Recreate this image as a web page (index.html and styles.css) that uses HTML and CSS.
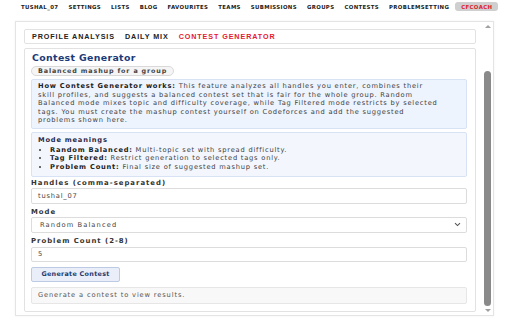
FILE: index.html
```html
<!DOCTYPE html>
<html>
<head>
<meta charset="utf-8">
<link rel="stylesheet" href="styles.css">
</head>
<body>
<nav class="topnav">
  <a class="nav-item">TUSHAL_07</a>
  <a class="nav-item">SETTINGS</a>
  <a class="nav-item">LISTS</a>
  <a class="nav-item">BLOG</a>
  <a class="nav-item">FAVOURITES</a>
  <a class="nav-item">TEAMS</a>
  <a class="nav-item">SUBMISSIONS</a>
  <a class="nav-item">GROUPS</a>
  <a class="nav-item">CONTESTS</a>
  <a class="nav-item">PROBLEMSETTING</a>
  <a class="nav-item nav-badge">CFCOACH</a>
</nav>
<div class="panel">
  <div class="panel-content">
    <div class="tabs">
      <span class="tab">PROFILE ANALYSIS</span>
      <span class="tab">DAILY MIX</span>
      <span class="tab tab-active">CONTEST GENERATOR</span>
    </div>
    <div class="card">
      <h2 class="card-title">Contest Generator</h2>
      <div class="pill-row"><span class="pill">Balanced mashup for a group</span></div>
      <div class="info-box">
        <b>How Contest Generator works:</b> This feature analyzes all handles you enter, combines their<br>skill profiles, and suggests a balanced contest set that is fair for the whole group. Random<br>Balanced mode mixes topic and difficulty coverage, while Tag Filtered mode restricts by selected<br>tags. You must create the mashup contest yourself on Codeforces and add the suggested<br>problems shown here.
      </div>
      <div class="info-box mode-box">
        <div class="mode-title">Mode meanings</div>
        <ul class="mode-list">
          <li><b>Random Balanced:</b> Multi-topic set with spread difficulty.</li>
          <li><b>Tag Filtered:</b> Restrict generation to selected tags only.</li>
          <li><b>Problem Count:</b> Final size of suggested mashup set.</li>
        </ul>
      </div>
      <label class="field-label label-first">Handles (comma-separated)</label>
      <div class="field">tushal_07</div>
      <label class="field-label">Mode</label>
      <div class="field field-select">
        <span>Random Balanced</span>
        <svg class="chev" width="7" height="5" viewBox="0 0 7 5"><path d="M1 1.2 L3.5 3.6 L6 1.2" fill="none" stroke="#555" stroke-width="1.1"/></svg>
      </div>
      <label class="field-label">Problem Count (2-8)</label>
      <div class="field field-short">5</div>
      <div class="btn-row"><button class="btn">Generate Contest</button></div>
      <div class="result">Generate a contest to view results.</div>
    </div>
  </div>
  <div class="scrollbar">
    <div class="arrow arrow-up"></div>
    <div class="track"><div class="thumb"></div></div>
    <div class="arrow arrow-down"></div>
  </div>
</div>
</body>
</html>
```
FILE: styles.css
```css
* { box-sizing: border-box; }
html, body { margin: 0; padding: 0; background: #fff; }
body {
  font-family: "DejaVu Sans", Verdana, sans-serif;
  color: #333;
  width: 512px;
  height: 320px;
  overflow: hidden;
}
.topnav {
  display: flex;
  align-items: center;
  height: 13px;
  padding-left: 21px;
}
.nav-item {
  font-weight: bold;
  font-size: 5.4px;
  letter-spacing: 0.35px;
  color: #222;
  margin-right: 10px;
  white-space: nowrap;
}
.nav-badge {
  background: #cfcfcf;
  color: #e0202a;
  border-radius: 3px;
  padding: 1.5px 6px;
  margin-left: -4px;
  margin-right: 0;
}
.panel {
  display: flex;
  margin: 8px 18px 0 15px;
  height: 295px;
  border: 1px solid #e4e4e4;
  box-shadow: 0 0 2px rgba(0,0,0,0.06);
}
.panel-content {
  flex: 1;
  padding: 7px 6px 0 8px;
  display: flex;
  flex-direction: column;
  gap: 4px;
}
.tabs {
  display: flex;
  align-items: center;
  height: 15px;
  border: 1px solid #e2e2e2;
  border-radius: 2px;
  padding-left: 7px;
  gap: 10px;
  font-family: "Liberation Sans", Arial, sans-serif;
  font-weight: bold;
  font-size: 7.2px;
  letter-spacing: 0.9px;
  color: #222;
}
.tab-active { color: #e5202e; }
.card {
  border: 1px solid #e2e2e2;
  border-radius: 2px;
  height: 264px;
  padding: 2px 8px 0 6px;
  display: flex;
  flex-direction: column;
}
.card-title {
  margin: 0 0 0 1px;
  font-size: 9.4px;
  font-weight: bold;
  letter-spacing: 0.35px;
  color: #1b3a78;
  line-height: 14px;
}
.pill-row { display: flex; margin-top: 1px; }
.pill {
  font-size: 6.4px;
  font-weight: bold;
  letter-spacing: 0.85px;
  color: #444;
  background: #f5f5f5;
  border: 1px solid #d9d9d9;
  border-radius: 6px;
  padding: 0 6px;
  line-height: 8px;
}
.info-box {
  margin-top: 3px;
  background: #eef4fd;
  border: 1px solid #d7e3f4;
  border-radius: 2px;
  padding: 2px 6px 3px 6px;
  font-size: 6.7px;
  letter-spacing: 0.78px;
  line-height: 8.5px;
  color: #3d3d3d;
}
.info-box b { color: #222; }
.mode-box { background: #f3f7fd; padding-top: 3px; padding-bottom: 5px; line-height: 8.5px; }
.mode-title { font-weight: bold; color: #2a2a4a; }
.mode-list { margin: 1.5px 0 0 0; padding-left: 12px; }
.field-label {
  display: block;
  margin-top: 4px;
  font-size: 6.9px;
  font-weight: bold;
  letter-spacing: 1px;
  color: #333;
  line-height: 8px;
}
.label-first { margin-top: 1.5px; }
.field {
  margin-top: 1px;
  height: 16px;
  border: 1px solid #dcdcdc;
  border-radius: 2px;
  display: flex;
  align-items: center;
  padding-left: 6px;
  font-size: 6.7px;
  letter-spacing: 0.8px;
  color: #444;
}
.field-short { margin-top: 2px; height: 15px; }
.field-select { justify-content: space-between; padding-right: 5px; padding-left: 8px; letter-spacing: 1.1px; }
.chev { display: block; }
.btn-row { display: flex; margin-top: 5px; }
.btn {
  font-family: "DejaVu Sans", Verdana, sans-serif;
  font-size: 6.4px;
  font-weight: bold;
  letter-spacing: 0.3px;
  color: #1f3a6e;
  background: #e9eef8;
  border: 1px solid #bccbe3;
  border-radius: 2px;
  height: 15px;
  width: 89px;
  padding: 0;
}
.result {
  margin-top: 5px;
  height: 17px;
  background: #f8f8f8;
  border: 1px solid #e6e6e6;
  border-radius: 2px;
  display: flex;
  align-items: center;
  padding-left: 6px;
  font-size: 6.7px;
  letter-spacing: 0.85px;
  color: #555;
}
.scrollbar {
  width: 11px;
  display: flex;
  flex-direction: column;
  align-items: center;
}
.arrow { width: 0; height: 0; border-left: 3px solid transparent; border-right: 3px solid transparent; }
.arrow-up { border-bottom: 3px solid #a0a0a0; margin-top: 3px; }
.arrow-down { border-top: 3px solid #a0a0a0; margin-bottom: 3px; }
.track { flex: 1; width: 100%; display: flex; justify-content: center; padding-top: 43px; padding-bottom: 3px; }
.thumb { width: 7px; height: 100%; background: #8a8a8a; border-radius: 4px; }
```
